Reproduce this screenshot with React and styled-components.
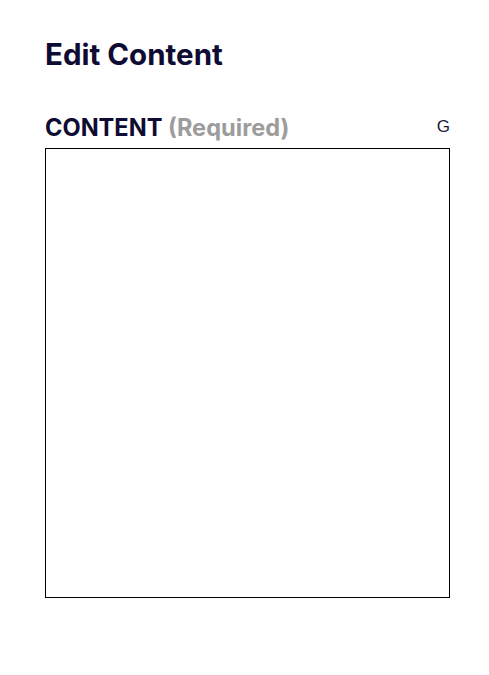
import styled, { createGlobalStyle } from "styled-components"

const GlobalStyle = createGlobalStyle`
    body {
        margin: 0;
        background: #ffffff;
        font-family: Inter, "Liberation Sans", sans-serif;
    }
`

const Page = styled.div`
    box-sizing: border-box;
    width: 450px;
    padding: 36px 0 0 45px;
`

const Title = styled.h1`
    margin: 0 0 41px 0;
    font-size: 29.5px;
    font-weight: 700;
    line-height: normal;
    color: #0f0c33;
`

const FieldHeader = styled.div`
    display: flex;
    justify-content: space-between;
    align-items: flex-start;
    margin-bottom: 6px;
`

const Label = styled.label`
    font-size: 23.6px;
    font-weight: 700;
    line-height: normal;
    color: #0f0c33;
`

const Hint = styled.span`
    color: #9c9c9c;
`

const Counter = styled.span`
    font-family: "Liberation Sans", Arial, sans-serif;
    font-size: 17px;
    line-height: normal;
    color: #1a1838;
    margin-top: 4px;
`

const Editor = styled.textarea`
    display: block;
    box-sizing: border-box;
    width: 405px;
    height: 450px;
    margin: 0;
    border: 1px solid #000000;
    border-radius: 0;
    resize: none;
    outline: none;
    padding: 8px;
    font-family: Inter, sans-serif;
    font-size: 16px;
`

export default function App() {
    return (
        <Page>
            <GlobalStyle />
            <Title>Edit Content</Title>

            <FieldHeader>
                <Label>
                    CONTENT <Hint>(Required)</Hint>
                </Label>
                <Counter>G</Counter>
            </FieldHeader>

            <Editor />
        </Page>
    );
}
